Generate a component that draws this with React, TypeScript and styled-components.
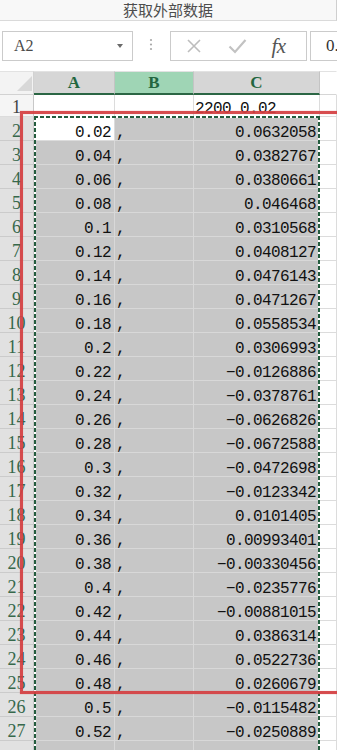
import React from "react";
import styled, { createGlobalStyle } from "styled-components";

const Global = createGlobalStyle`
  html, body { margin: 0; padding: 0; background: #ffffff; overflow: hidden; }
  #root { width: 337px; height: 750px; }
`;

const COLS = "34px 81px 79px 126px 1fr";

const Page = styled.div`
  position: relative;
  width: 337px;
  height: 750px;
  overflow: hidden;
  background: #ffffff;
  font-family: "Liberation Sans", sans-serif;
`;

const TitleBar = styled.div`
  box-sizing: border-box;
  width: 337px;
  height: 21px;
  background: #f8f8f8;
  border-bottom: 1px solid #dadada;
  border-right: 1px solid #cfcfcf;
  display: flex;
  justify-content: center;
  align-items: flex-start;
  padding-top: 1px;
  font-family: "Noto Sans CJK SC", sans-serif;
  font-size: 15px;
  line-height: 17px;
  color: #4d4d4d;
`;

const FormulaBar = styled.div`
  display: flex;
  height: 30px;
  margin-top: 10px;
  margin-bottom: 10px;
`;

const NameBox = styled.div`
  box-sizing: border-box;
  margin-left: 2px;
  width: 131px;
  border: 1px solid #cbcbcb;
  display: flex;
  align-items: center;
  justify-content: space-between;
  padding: 0 9px 0 11px;
  font-family: "Liberation Serif", serif;
  font-size: 16px;
  color: #4a4a4a;
`;

const Caret = styled.span`
  width: 0;
  height: 0;
  border-left: 3.5px solid transparent;
  border-right: 3.5px solid transparent;
  border-top: 4px solid #6a6a6a;
`;

const Grip = styled.div`
  width: 37px;
  display: flex;
  align-items: center;
  justify-content: center;
  padding-right: 2px;
  box-sizing: border-box;
`;

const FxBox = styled.div`
  box-sizing: border-box;
  width: 137px;
  border: 1px solid #cbcbcb;
  display: grid;
  grid-template-columns: 46px 40px 1fr;
  align-items: center;
  justify-items: center;
`;

const FxText = styled.span`
  font-family: "Liberation Serif", serif;
  font-style: italic;
  font-size: 21px;
  color: #555555;
  margin-left: -6px;
  letter-spacing: -0.5px;
`;

const ValueBox = styled.div`
  box-sizing: border-box;
  flex: 1;
  margin-left: 3px;
  border: 1px solid #cbcbcb;
  border-right: none;
  display: flex;
  align-items: center;
  padding-left: 15px;
  font-family: "Liberation Serif", serif;
  font-size: 17px;
  color: #333333;
  overflow: hidden;
  white-space: nowrap;
`;

const Sheet = styled.div``;

const GridRow = styled.div<{ $h: number }>`
  display: grid;
  grid-template-columns: ${COLS};
  height: ${(p) => p.$h}px;
`;

const Corner = styled.div`
  box-sizing: border-box;
  background: #f3f3f3;
  border-top: 1px solid #e2e2e2;
  border-right: 1px solid #d2d2d2;
  border-bottom: 1px solid #d2d2d2;
  display: flex;
  align-items: flex-end;
  justify-content: flex-end;
  padding: 0 1px 3px 0;
`;

const CornerMark = styled.div`
  width: 0;
  height: 0;
  border-left: 15px solid transparent;
  border-bottom: 15px solid #d8d8d8;
`;

type Tone = "plain" | "sel" | "active";

const ColHead = styled.div<{ $tone: Tone }>`
  box-sizing: border-box;
  display: flex;
  align-items: center;
  justify-content: center;
  border-top: 1px solid #e2e2e2;
  background: ${(p) =>
    p.$tone === "active" ? "#9fd5b5" : p.$tone === "sel" ? "#d6d6d6" : "#ffffff"};
  border-right: 1px solid ${(p) => (p.$tone === "plain" ? "#ffffff" : "#c4c4c4")};
  border-bottom: ${(p) => (p.$tone === "plain" ? "1px solid #d6d6d6" : "2px solid #2b6644")};
  color: #23663f;
  font-family: "Liberation Serif", serif;
  font-weight: bold;
  font-size: 17px;
  padding-top: 1px;
`;

const RowBody = styled.div`
  position: relative;
`;

const RowHead = styled.div<{ $sel: boolean }>`
  box-sizing: border-box;
  display: flex;
  align-items: flex-end;
  justify-content: center;
  padding-bottom: 2px;
  background: ${(p) => (p.$sel ? "#e1e1e1" : "#f5f5f5")};
  border-right: 1px solid #c8c8c8;
  border-bottom: 1px solid ${(p) => (p.$sel ? "#cbcbcb" : "#dcdcdc")};
  color: ${(p) => (p.$sel ? "#36684b" : "#444444")};
  font-family: "Liberation Serif", serif;
  font-size: 18px;
  line-height: 14px;
`;

const Cell = styled.div<{ $tone: Tone; $right?: boolean }>`
  box-sizing: border-box;
  display: flex;
  align-items: flex-end;
  justify-content: ${(p) => (p.$right ? "flex-end" : "flex-start")};
  padding: ${(p) => (p.$right ? "0 3px 1px 0" : "0 0 1px 1px")};
  background: ${(p) => (p.$tone === "sel" ? "#c7c7c7" : "#ffffff")};
  border-right: 1px solid ${(p) => (p.$tone === "sel" ? "#d8d8d8" : "#dcdcdc")};
  border-bottom: 1px solid ${(p) => (p.$tone === "sel" ? "#d8d8d8" : "#dcdcdc")};
  font-family: "Liberation Mono", monospace;
  font-size: 16px;
  letter-spacing: -0.6px;
  line-height: 12px;
  color: #111111;
  white-space: nowrap;
  overflow: hidden;
`;

const Marquee = styled.div`
  position: absolute;
  left: 34px;
  top: 21px;
  width: 286px;
  bottom: -40px;
  pointer-events: none;
  background:
    repeating-linear-gradient(90deg, #245c3e 0 4px, #ffffff 4px 6px) top left / 100% 2px no-repeat,
    repeating-linear-gradient(180deg, #245c3e 0 4px, #ffffff 4px 6px) top left / 2px 100% no-repeat,
    repeating-linear-gradient(180deg, #245c3e 0 4px, #ffffff 4px 6px) top right / 2px 100% no-repeat;
`;

const RedFrame = styled.div`
  position: absolute;
  left: 20px;
  top: 111px;
  width: 340px;
  height: 583px;
  box-sizing: border-box;
  border: 3px solid rgba(212, 62, 64, 0.92);
  box-shadow: 0 0 1px rgba(212, 62, 64, 0.5), inset 0 0 1px rgba(212, 62, 64, 0.5);
  pointer-events: none;
`;

const data: [string, string][] = [
  ["0.02", "0.0632058"],
  ["0.04", "0.0382767"],
  ["0.06", "0.0380661"],
  ["0.08", "0.046468"],
  ["0.1", "0.0310568"],
  ["0.12", "0.0408127"],
  ["0.14", "0.0476143"],
  ["0.16", "0.0471267"],
  ["0.18", "0.0558534"],
  ["0.2", "0.0306993"],
  ["0.22", "\u22120.0126886"],
  ["0.24", "\u22120.0378761"],
  ["0.26", "\u22120.0626826"],
  ["0.28", "\u22120.0672588"],
  ["0.3", "\u22120.0472698"],
  ["0.32", "\u22120.0123342"],
  ["0.34", "0.0101405"],
  ["0.36", "0.00993401"],
  ["0.38", "\u22120.00330456"],
  ["0.4", "\u22120.0235776"],
  ["0.42", "\u22120.00881015"],
  ["0.44", "0.0386314"],
  ["0.46", "0.0522736"],
  ["0.48", "0.0260679"],
  ["0.5", "\u22120.0115482"],
  ["0.52", "\u22120.0250889"],
];

const CrossIcon = () => (
  <svg width="16" height="16" viewBox="0 0 16 16">
    <path d="M2 2 L14 14 M14 2 L2 14" stroke="#bdbdbd" strokeWidth="1.6" fill="none" />
  </svg>
);

const CheckIcon = () => (
  <svg width="19" height="16" viewBox="0 0 19 16">
    <path d="M1.5 8.5 L7 14 L17.5 2" stroke="#c2c2c2" strokeWidth="2.2" fill="none" />
  </svg>
);

const GripIcon = () => (
  <svg width="4" height="16" viewBox="0 0 4 16">
    <circle cx="2" cy="2" r="1.1" fill="#a9a9a9" />
    <circle cx="2" cy="6.5" r="1.1" fill="#a9a9a9" />
    <circle cx="2" cy="11" r="1.1" fill="#a9a9a9" />
  </svg>
);

export default function App() {
  return (
    <Page>
      <Global />
      <TitleBar>获取外部数据</TitleBar>
      <FormulaBar>
        <NameBox>
          <span>A2</span>
          <Caret />
        </NameBox>
        <Grip>
          <GripIcon />
        </Grip>
        <FxBox>
          <CrossIcon />
          <CheckIcon />
          <FxText>fx</FxText>
        </FxBox>
        <ValueBox>0.</ValueBox>
      </FormulaBar>
      <Sheet>
        <GridRow $h={24}>
          <Corner>
            <CornerMark />
          </Corner>
          <ColHead $tone="sel">A</ColHead>
          <ColHead $tone="active">B</ColHead>
          <ColHead $tone="sel">C</ColHead>
          <ColHead $tone="plain" />
        </GridRow>
        <RowBody>
          <GridRow $h={22}>
            <RowHead $sel={false}>1</RowHead>
            <Cell $tone="plain" $right />
            <Cell $tone="plain" />
            <Cell $tone="plain">2200 0.02</Cell>
            <Cell $tone="plain" />
          </GridRow>
          {data.map(([a, c], i) => (
            <GridRow $h={24} key={i}>
              <RowHead $sel>{i + 2}</RowHead>
              <Cell $tone={i === 0 ? "active" : "sel"} $right>
                {a}
              </Cell>
              <Cell $tone="sel">,</Cell>
              <Cell $tone="sel" $right>
                {c}
              </Cell>
              <Cell $tone="plain" />
            </GridRow>
          ))}
          <GridRow $h={24}>
            <RowHead $sel />
            <Cell $tone="sel" />
            <Cell $tone="sel" />
            <Cell $tone="sel" />
            <Cell $tone="plain" />
          </GridRow>
          <Marquee />
        </RowBody>
      </Sheet>
      <RedFrame />
    </Page>
  );
}
